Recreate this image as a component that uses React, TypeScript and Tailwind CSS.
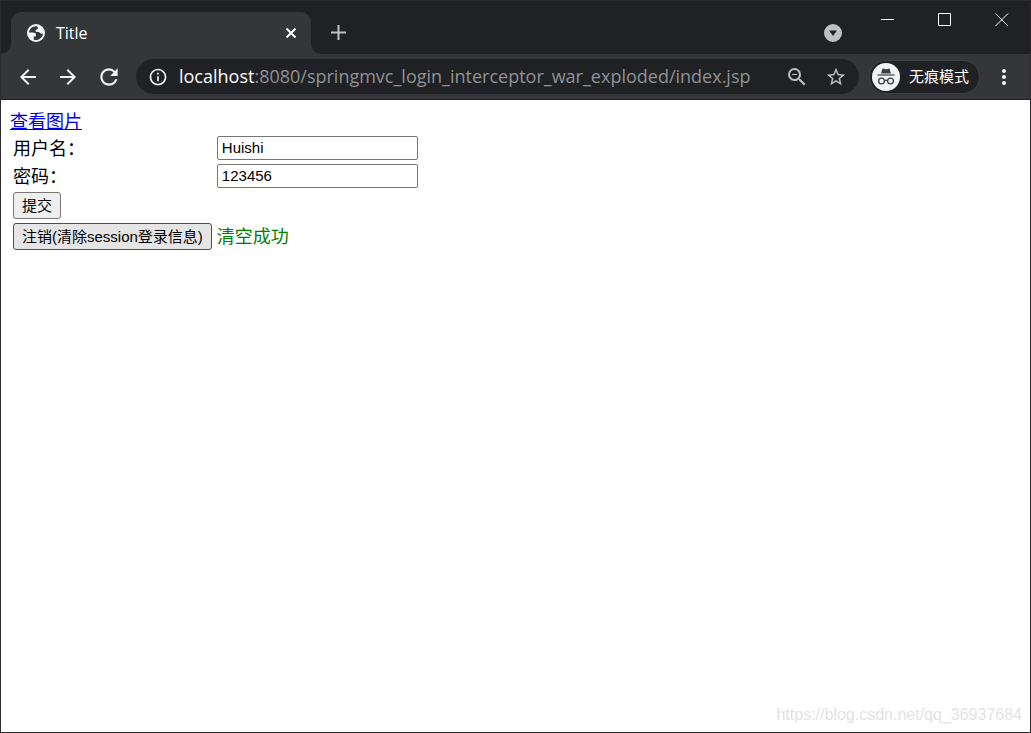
import { useState } from "react";
import {
  MdArrowBack,
  MdArrowForward,
  MdInfoOutline,
  MdMoreVert,
  MdRefresh,
  MdStarBorder,
  MdZoomOut,
} from "react-icons/md";

function GlobeIcon() {
  return (
    <svg width="18" height="18" viewBox="0 0 18 18">
      <circle cx="9" cy="9" r="9" fill="#f1f3f4" />
      <path
        d="M10 2.200C5.500 1.800 2.300 4.800 2.100 8.500h3.700c2 0 3.200.8 3.200 2.300v1.700H6.800v3.200c4.600 1.200 9-1.900 9.200-6.500-1.500.9-2.600.6-3.300-.5-.7-1.300-3.700 0-4.200-1.700-.4-1.700 2.700-1.200 2.500-3.200z"
        fill="#35363a"
      />
    </svg>
  );
}

function IncognitoIcon() {
  return (
    <svg width="28" height="28" viewBox="0 0 28 28">
      <circle cx="14" cy="14" r="14" fill="#f1f3f4" />
      <path d="M10.500 5.500 14 6.200l3.500-.7L19 10.500H9z" fill="#3c4043" />
      <path d="M5.500 12h17" stroke="#3c4043" strokeWidth="1.200" />
      <g fill="none" stroke="#3c4043" strokeWidth="1.300">
        <circle cx="9.500" cy="18" r="2.900" />
        <circle cx="18.500" cy="18" r="2.900" />
        <path d="M12.400 17.600q1.600-1 3.200 0" />
      </g>
    </svg>
  );
}

function TabStrip() {
  return (
    <div className="flex h-[53px] items-end bg-[#202124]">
      {/* active tab, with the flared corners at its foot */}
      <svg width="10" height="10" viewBox="0 0 10 10" fill="#35363a">
        <path d="M10 0v10H0A10 10 0 0 0 10 0z" />
      </svg>
      <div className="flex h-[42px] w-[300px] items-center rounded-t-[10px] bg-[#35363a] pr-[11px] pl-4">
        <GlobeIcon />
        <span className="ml-[11px] flex-1 font-['Open_Sans',sans-serif] text-[16px] text-white">
          Title
        </span>
        <button aria-label="Close tab" className="p-1">
          <svg width="10" height="10" viewBox="0 0 10 10" stroke="#fff" strokeWidth="2">
            <path d="M.5.5l9 9M9.500.5l-9 9" />
          </svg>
        </button>
      </div>
      <svg width="10" height="10" viewBox="0 0 10 10" fill="#35363a">
        <path d="M0 0v10h10A10 10 0 0 1 0 0z" />
      </svg>
      <button aria-label="New tab" className="mb-[14px] ml-[10px]">
        <svg width="15" height="15" viewBox="0 0 15 15" stroke="#bdc1c6" strokeWidth="2">
          <path d="M7.500 0v15M0 7.500h15" />
        </svg>
      </button>

      {/* window controls */}
      <div className="ml-auto flex h-full items-start">
        <button aria-label="Search tabs" className="mt-[23px] mr-[39px]">
          <svg width="18" height="18" viewBox="0 0 18 18">
            <circle cx="9" cy="9" r="9" fill="#bdc1c6" />
            <path d="M5 6.500h8L9 12z" fill="#202124" />
          </svg>
        </button>
        <div className="mt-3 mr-[21px] flex gap-[43px]">
          <button aria-label="Minimize">
            <svg width="14" height="14" viewBox="0 0 14 14" stroke="#fff">
              <path d="M0 6.500h13" />
            </svg>
          </button>
          <button aria-label="Maximize">
            <svg width="14" height="14" viewBox="0 0 14 14" stroke="#fff" fill="none">
              <path d="M.5.5h12v12H.5z" />
            </svg>
          </button>
          <button aria-label="Close">
            <svg width="14" height="14" viewBox="0 0 14 14" stroke="#fff">
              <path d="M.5.5l12.500 12.500M13 .5L.5 13" />
            </svg>
          </button>
        </div>
      </div>
    </div>
  );
}

function Toolbar() {
  return (
    <div className="flex h-[46px] items-center border-b border-[#202124] bg-[#35363a] pr-[14px] pl-[15px] text-[#f1f3f4]">
      <div className="flex gap-4">
        <button aria-label="Back">
          <MdArrowBack size={24} />
        </button>
        <button aria-label="Forward">
          <MdArrowForward size={24} />
        </button>
        <button aria-label="Reload">
          <MdRefresh size={26} />
        </button>
      </div>

      {/* address bar */}
      <div className="ml-[14px] flex h-[35px] min-w-0 flex-1 items-center rounded-full bg-[#202124] px-3">
        <MdInfoOutline size={20} />
        <p className="ml-[11px] min-w-0 flex-1 overflow-hidden font-['Open_Sans',sans-serif] text-[18px] whitespace-nowrap text-[#8f9296]">
          <span className="text-white">localhost</span>
          :8080/springmvc_login_interceptor_war_exploded/index.jsp
        </p>
        <button aria-label="Zoom out" className="mr-4 text-[#bdc1c6]">
          <MdZoomOut size={24} />
        </button>
        <button aria-label="Bookmark" className="text-[#bdc1c6]">
          <MdStarBorder size={22} />
        </button>
      </div>

      <button className="ml-[10px] flex h-[34px] items-center gap-[9px] rounded-full border border-[#3f4043] bg-[#202124] pr-[10px] pl-[2px]">
        <IncognitoIcon />
        <span className="font-['Noto_Sans_CJK_SC',sans-serif] text-[15px] text-white">
          无痕模式
        </span>
      </button>
      <button aria-label="Menu" className="ml-3">
        <MdMoreVert size={24} />
      </button>
    </div>
  );
}

function LoginForm() {
  const [username, setUsername] = useState("Huishi");
  const [password, setPassword] = useState("123456");

  return (
    <form onSubmit={(e) => e.preventDefault()}>
      <table className="border-separate border-spacing-[2px]">
        <tbody>
          <tr>
            <td className="px-px pt-[2px]">
              <label htmlFor="username">用户名：</label>
            </td>
            <td className="p-px">
              <input
                id="username"
                type="text"
                value={username}
                onChange={(e) => setUsername(e.target.value)}
                className="block h-6 w-[201px] rounded-[2px] border border-[#767676] px-1 text-[15px]"
              />
            </td>
          </tr>
          <tr>
            <td className="px-px pt-[2px]">
              <label htmlFor="password">密码：</label>
            </td>
            <td className="p-px">
              <input
                id="password"
                type="text"
                value={password}
                onChange={(e) => setPassword(e.target.value)}
                className="block h-6 w-[201px] rounded-[2px] border border-[#767676] px-1 text-[15px]"
              />
            </td>
          </tr>
          <tr>
            <td className="p-px">
              <button
                type="submit"
                className="block h-[27px] rounded-[3px] border border-[#767676] bg-[#efefef] px-2 text-[15px]"
              >
                提交
              </button>
            </td>
          </tr>
          <tr>
            <td className="py-px pr-[2px] pl-px">
              <button
                type="button"
                className="block h-[27px] rounded-[3px] border border-[#4f4f4f] bg-[#e5e5e5] px-2 text-[15px]"
              >
                注销(清除session登录信息)
              </button>
            </td>
            <td className="p-px text-[#008000]">清空成功</td>
          </tr>
        </tbody>
      </table>
    </form>
  );
}

export default function App() {
  return (
    <div className="flex min-h-screen flex-col border border-[#2b2b2d] bg-white">
      <TabStrip />
      <Toolbar />

      {/* page */}
      <main className="flex-1 px-[9px] pt-[11px] font-['Liberation_Sans','Noto_Sans_CJK_SC',sans-serif] text-[18px] leading-6 text-black">
        <a href="#pictures" className="block w-fit leading-[22px] text-[#0000ee] underline">
          查看图片
        </a>
        <LoginForm />
      </main>

      <footer className="px-2 pb-[5px] text-right font-['Liberation_Sans',sans-serif] text-[16px] leading-6 text-[#e3e3e3]">
        https://blog.csdn.net/qq_36937684
      </footer>
    </div>
  );
}
